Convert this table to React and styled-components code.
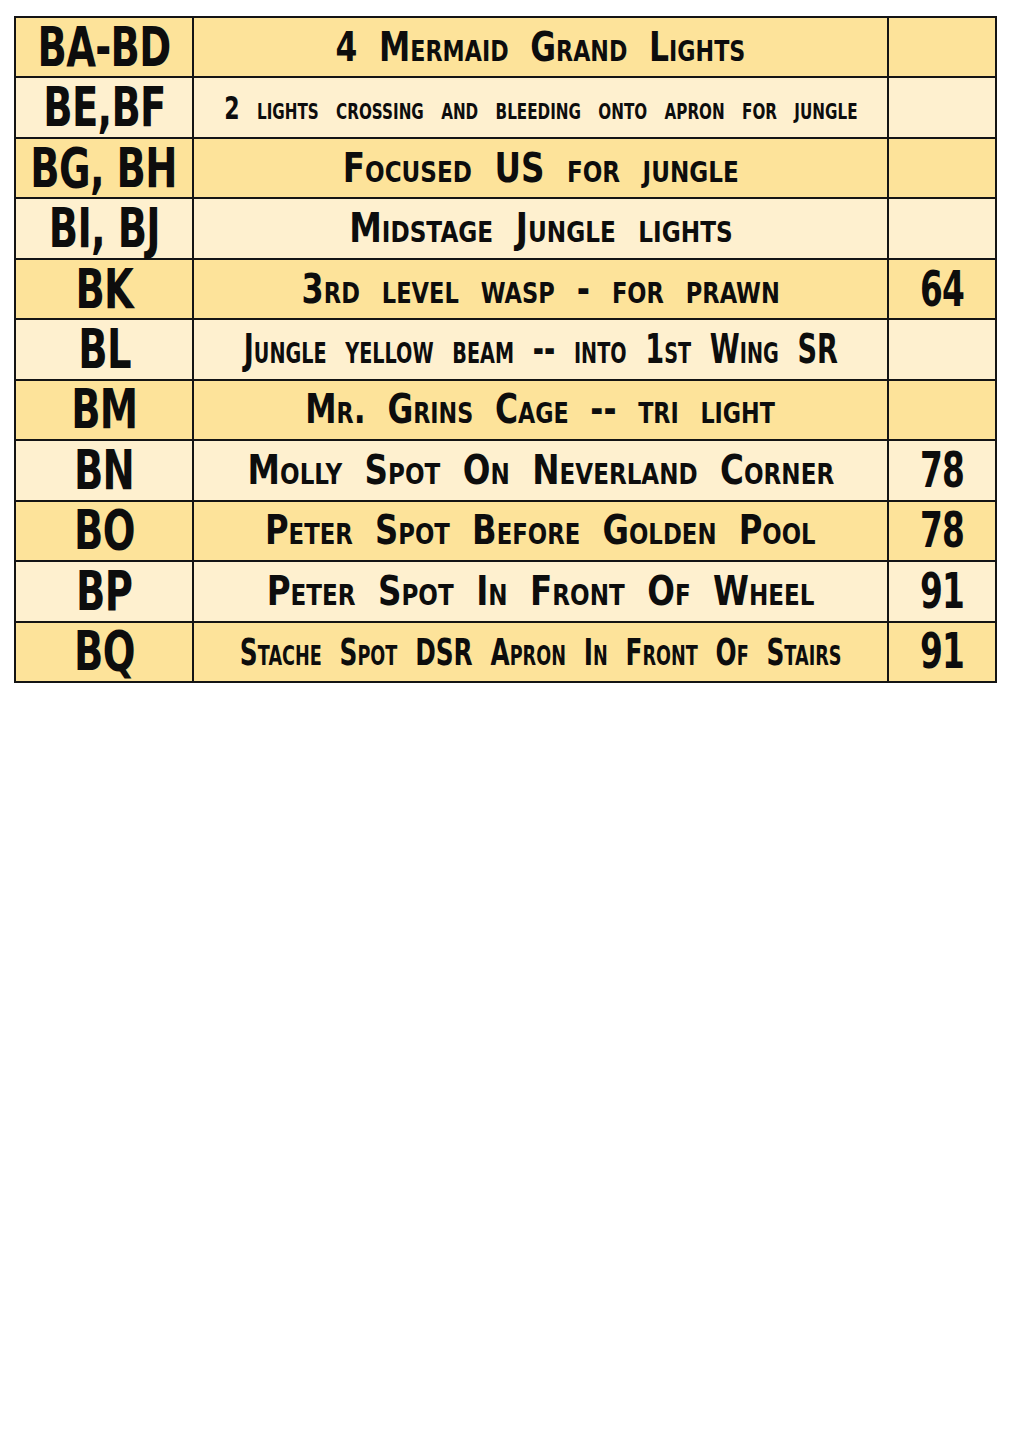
import React from "react";
import styled, { createGlobalStyle } from "styled-components";

const Global = createGlobalStyle`
  html, body { margin: 0; padding: 0; background: #ffffff; }
  body { font-family: "DejaVu Sans", sans-serif; }
`;

const Page = styled.div`
  width: 1009px;
  height: 1453px;
  padding: 16px 12px 0 14px;
  box-sizing: border-box;
  background: #ffffff;
  overflow: hidden;
`;

const Table = styled.div`
  display: grid;
  grid-template-columns: 176px 693px 106px;
  grid-template-rows: repeat(11, 1fr);
  gap: 2px;
  padding: 2px;
  height: 667px;
  width: 983px;
  box-sizing: border-box;
  background: #141414;
`;

const Cell = styled.div`
  background: ${(p) => (p.$shade ? "#fde39a" : "#fef0cf")};
  display: flex;
  align-items: center;
  justify-content: center;
  color: #0d0d0d;
  font-family: "DejaVu Sans", sans-serif;
  font-weight: 700;
  white-space: nowrap;
  min-width: 0;
`;

const Code = styled(Cell)`
  font-size: 55px;
  letter-spacing: -1px;
`;

const Desc = styled(Cell)`
  font-size: ${(p) => p.$size}px;
  font-variant: small-caps;
  word-spacing: 14px;
`;

const Cue = styled(Cell)`
  font-size: 49px;
  letter-spacing: -1px;
`;

const Text = styled.span`
  display: inline-block;
  flex: none;
  transform: scaleX(${(p) => p.$sx});
  transform-origin: center;
  line-height: 1;
`;

const rows = [
  { code: "BA-BD", desc: "4 Mermaid Grand Lights", size: 41, sx: 0.766, cue: "" },
  { code: "BE,BF", desc: "2 lights crossing and bleeding onto apron for jungle", size: 32, sx: 0.69, cue: "" },
  { code: "BG, BH", desc: "Focused US for jungle", size: 41, sx: 0.796, cue: "" },
  { code: "BI, BJ", desc: "Midstage Jungle lights", size: 41, sx: 0.799, cue: "" },
  { code: "BK", desc: "3rd level wasp - for prawn", size: 41, sx: 0.777, cue: "64" },
  { code: "BL", desc: "Jungle yellow beam -- into 1st Wing SR", size: 41, sx: 0.662, cue: "" },
  { code: "BM", desc: "Mr. Grins Cage -- tri light", size: 41, sx: 0.767, cue: "" },
  { code: "BN", desc: "Molly Spot On Neverland Corner", size: 41, sx: 0.795, cue: "78" },
  { code: "BO", desc: "Peter Spot Before Golden Pool", size: 41, sx: 0.786, cue: "78" },
  { code: "BP", desc: "Peter Spot In Front Of Wheel", size: 41, sx: 0.795, cue: "91" },
  { code: "BQ", desc: "Stache Spot DSR Apron In Front Of Stairs", size: 38, sx: 0.653, cue: "91" },
];

export default function App() {
  return (
    <Page>
      <Global />
      <Table>
        {rows.map((r, i) => {
          const shade = i % 2 === 0;
          return (
            <React.Fragment key={r.code}>
              <Code $shade={shade}>
                <Text $sx={0.7}>{r.code}</Text>
              </Code>
              <Desc $shade={shade} $size={r.size}>
                <Text $sx={r.sx}>{r.desc}</Text>
              </Desc>
              <Cue $shade={shade}>
                <Text $sx={0.67}>{r.cue}</Text>
              </Cue>
            </React.Fragment>
          );
        })}
      </Table>
    </Page>
  );
}
